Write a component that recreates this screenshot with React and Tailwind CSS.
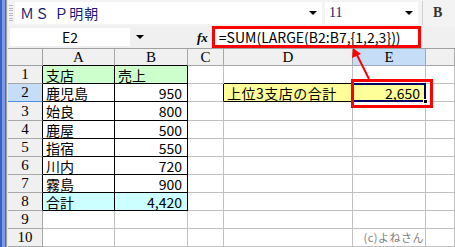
import React from "react";

const jp = { fontFamily: '"Noto Sans CJK JP", "Liberation Sans", sans-serif' };
const serif = { fontFamily: '"Liberation Serif", "Noto Sans CJK JP", serif' };

const cols = ["A", "B", "C", "D", "E", ""];
const rowHeights = [18, 18, 19, 18, 18, 18, 18, 18, 18, 18];

const data = [
  ["支店", "売上"],
  ["鹿児島", "950"],
  ["始良", "800"],
  ["鹿屋", "500"],
  ["指宿", "550"],
  ["川内", "720"],
  ["霧島", "900"],
  ["合計", "4,420"],
];

const Arrow = () => (
  <svg width="10" height="6" viewBox="0 0 10 6" className="shrink-0">
    <path d="M1 1 L9 1 L5 5 Z" fill="#000" />
  </svg>
);

function Cell({ r, c }) {
  // r: 1-based row, c: 0..5 for A..F
  const base = "flex items-center overflow-hidden whitespace-nowrap leading-none";
  let cls = `border-r border-b border-[#c0c0c0] ${base}`;
  let content = null;

  if (r <= 8 && c <= 1) {
    const [a, b] = data[r - 1];
    let bg = "bg-white";
    if (r === 1) bg = "bg-[#ccffcc]";
    if (r === 8) bg = "bg-[#ccffff]";
    cls = `border-r border-b border-black ${base} ${bg}`;
    if (c === 0) content = <span className="pl-[3px] text-[14px] text-black">{a}</span>;
    else if (r === 1) content = <span className="pl-[3px] text-[14px] text-black">{b}</span>;
    else content = <span className="ml-auto pr-[5px] text-[14px] text-black">{b}</span>;
  } else if (r === 1 && c === 3) {
    cls = `border-r border-b border-r-[#c0c0c0] border-b-black ${base}`;
  } else if (r === 2 && c === 2) {
    cls = `border-r border-b border-r-black border-b-[#c0c0c0] ${base}`;
  } else if (r === 2 && c === 3) {
    cls = `border-r border-b border-black bg-[#ffff99] ${base}`;
    content = <span className="pl-[3px] text-[14px] text-black tracking-[0.5px]">上位3支店の合計</span>;
  } else if (r === 2 && c === 4) {
    cls = `relative border-r border-b border-[#c0c0c0] bg-[#ffff99] flex items-center whitespace-nowrap leading-none`;
    content = (
      <>
        <div className="absolute inset-[-1px] border-2 border-[#000066]" />
        <div className="absolute right-[-3px] bottom-[-3px] w-[5px] h-[5px] bg-black border border-white" />
        <span className="ml-auto pr-[5px] text-[14px] text-black">2,650</span>
      </>
    );
  } else if (r === 10 && c === 4) {
    content = (
      <span className="ml-auto pr-[1px] text-[11px] text-[#808080] tracking-[0.5px]">
        (c)よねさん
      </span>
    );
  }

  return (
    <div className={cls} style={jp}>
      {content}
    </div>
  );
}

export default function App() {
  return (
    <div className="w-[455px] h-[247px] flex overflow-hidden bg-white relative select-none">
      {/* left window edge */}
      <div className="w-[8px] h-full flex shrink-0">
        <div className="w-[2px] bg-[#3a5fc8]" />
        <div className="w-[3px] bg-[#7b9be8]" />
        <div className="w-[1px] bg-[#4466cc]" />
        <div className="w-[1px] bg-[#a0a0a0]" />
        <div className="w-[1px] bg-[#e8e8e8]" />
      </div>

      <div className="flex-1 flex flex-col min-w-0">
        {/* formatting toolbar */}
        <div className="h-[26px] bg-[#f3f3f3] flex items-center shrink-0">
          <div className="w-[5px] h-[18px] ml-[1px] flex flex-col justify-between py-[1px]">
            {Array.from({ length: 7 }).map((_, i) => (
              <div key={i} className="h-[1px] w-[4px] bg-[#b8b8b8]" />
            ))}
          </div>
          <div className="ml-[1px] w-[307px] h-[22px] bg-white flex items-center">
            <span className="pl-[5px] text-[14px] leading-none text-[#1a1a6e] tracking-[1px]" style={jp}>
              ＭＳ Ｐ明朝
            </span>
            <div className="ml-auto mr-[4px]">
              <Arrow />
            </div>
          </div>
          <div className="ml-[3px] w-[93px] h-[22px] bg-white flex items-center">
            <span className="pl-[4px] text-[14px] leading-none text-[#1a1a6e]" style={serif}>
              11
            </span>
            <div className="ml-auto mr-[4px]">
              <Arrow />
            </div>
          </div>
          <div className="ml-[4px] w-[1px] h-[24px] bg-[#d0d0d0]" />
          <span className="ml-[10px] text-[14px] leading-none font-bold text-[#333]" style={serif}>
            B
          </span>
        </div>

        {/* formula bar */}
        <div className="h-[22px] bg-[#f0f0f0] flex items-center shrink-0">
          <div className="ml-[2px] w-[120px] h-[18px] bg-white flex items-center justify-center">
            <span className="text-[14px] leading-none text-black" style={jp}>
              E2
            </span>
          </div>
          <div className="ml-[5px]">
            <Arrow />
          </div>
          <span className="ml-[52px] text-[13px] leading-none italic font-bold text-black" style={serif}>
            fx
          </span>
          <div className="ml-[4px] w-[209px] h-[22px] border-[3px] border-[#ff0000] bg-white flex items-center">
            <span className="pl-[4px] text-[14px] leading-none text-black" style={jp}>
              =SUM(LARGE(B2:B7,{"{"}1,2,3{"}"}))
            </span>
          </div>
        </div>

        {/* sheet */}
        <div
          className="grid grid-cols-[35px_72px_73px_36px_129px_73px_1fr] border-t border-[#a0a0a0]"
          style={{ gridTemplateRows: `17px ${rowHeights.map((h) => h + "px").join(" ")}` }}
        >
          <div className="bg-[#f0f0f0] border-r border-b border-[#a0a0a0]" />
          {cols.map((c, i) => (
            <div
              key={c + i}
              className={`flex items-center justify-center leading-none border-r border-b text-[15px] text-black ${
                c === "E" ? "bg-[#c5ddf7] border-[#9ab]" : "bg-[#f0f0f0] border-[#a8a8a8]"
              } ${c === "A" || c === "B" ? "border-b-black" : ""}`}
              style={serif}
            >
              {c}
            </div>
          ))}
          {rowHeights.map((_, ri) => {
            const r = ri + 1;
            return (
              <React.Fragment key={r}>
                <div
                  className={`flex items-center justify-center leading-none border-r border-b text-[15px] text-black ${
                    r === 2 ? "bg-[#c5ddf7] border-b-[#4a90e2]" : "bg-[#f0f0f0] border-b-[#a8a8a8]"
                  } ${r <= 8 ? "border-r-black" : "border-r-[#a8a8a8]"}`}
                  style={serif}
                >
                  {r}
                </div>
                {[0, 1, 2, 3, 4, 5].map((c) => (
                  <Cell key={c} r={r} c={c} />
                ))}
              </React.Fragment>
            );
          })}
        </div>
      </div>

      {/* red highlight around E2 */}
      <div className="absolute left-[351px] top-[79px] w-[82px] h-[29px] border-[3px] border-[#ff0000] pointer-events-none" />
      {/* red arrow from E2 to formula */}
      <svg
        className="absolute left-0 top-0 pointer-events-none"
        width="455"
        height="247"
        viewBox="0 0 455 247"
      >
        <line x1="369" y1="79" x2="357" y2="55" stroke="#ff0000" strokeWidth="2" />
        <path d="M353 48 L352 58 L361 54 Z" fill="#ff0000" />
      </svg>
    </div>
  );
}
